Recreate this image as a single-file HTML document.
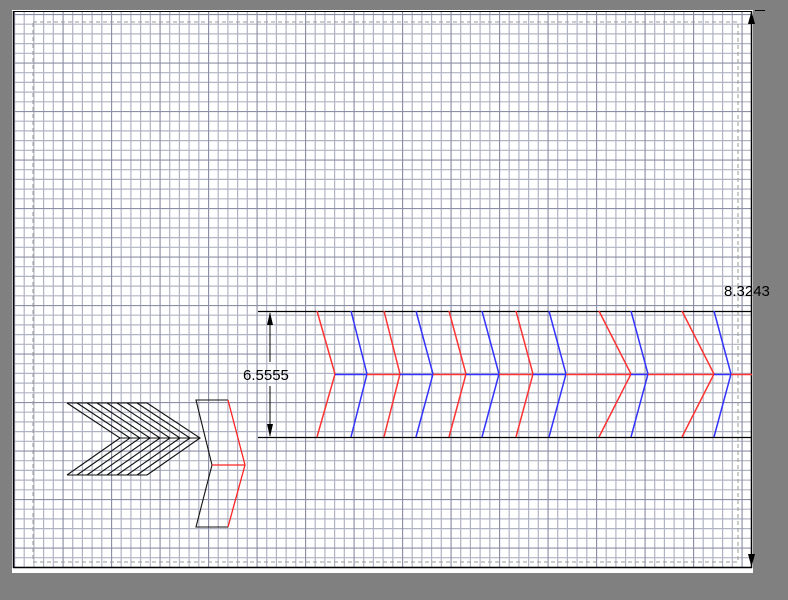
<!DOCTYPE html>
<html><head><style>
html,body{margin:0;padding:0;background:#808080;width:788px;height:600px;overflow:hidden}
svg{display:block}
</style></head><body>
<svg width="788" height="600" viewBox="0 0 788 600" xmlns="http://www.w3.org/2000/svg">
<defs>
<pattern id="g" x="14" y="14" width="48.5" height="48.5" patternUnits="userSpaceOnUse">
<g stroke="#b0b3c3" stroke-width="1.2">
<line x1="10.2" y1="0" x2="10.2" y2="48.5"/><line x1="19.9" y1="0" x2="19.9" y2="48.5"/><line x1="29.6" y1="0" x2="29.6" y2="48.5"/><line x1="39.3" y1="0" x2="39.3" y2="48.5"/>
<line y1="10.2" x1="0" y2="10.2" x2="48.5"/><line y1="19.9" x1="0" y2="19.9" x2="48.5"/><line y1="29.6" x1="0" y2="29.6" x2="48.5"/><line y1="39.3" x1="0" y2="39.3" x2="48.5"/>
</g>
<g stroke="#8c8fa6" stroke-width="1.3"><line x1="0.5" y1="0" x2="0.5" y2="48.5"/><line y1="0.5" x1="0" y2="0.5" x2="48.5"/></g>
</pattern>
</defs>
<rect x="12" y="10" width="741" height="563" fill="#fff"/>
<rect x="13" y="11" width="739" height="557" fill="url(#g)"/>
<rect x="33" y="22" width="705" height="540" fill="none" stroke="#999" stroke-dasharray="4,3"/>
<line x1="13.5" y1="11" x2="13.5" y2="568" stroke="#000" stroke-width="1.5"/>
<line x1="13" y1="11.5" x2="752" y2="11.5" stroke="#000"/>
<line x1="13" y1="567.5" x2="752" y2="567.5" stroke="#000" stroke-width="1.5"/>
<line x1="751.5" y1="11" x2="751.5" y2="568" stroke="#000" stroke-width="1.5"/>
<polygon points="751.5,11 748,24 755,24" fill="#000"/>
<polygon points="751.5,567 748,554 755,554" fill="#000"/>
<line x1="755" y1="10.5" x2="765" y2="10.5" stroke="#000"/>
<text x="724" y="296" font-family="Liberation Sans, sans-serif" font-size="15" fill="#000">8.3243</text>
<line x1="258" y1="311.5" x2="752" y2="311.5" stroke="#000" stroke-width="1.3"/>
<line x1="258" y1="437.5" x2="752" y2="437.5" stroke="#000" stroke-width="1.3"/>
<line x1="270" y1="313" x2="270" y2="362" stroke="#000"/>
<line x1="270" y1="386" x2="270" y2="436" stroke="#000"/>
<polygon points="270,312 267,325 273,325" fill="#000"/>
<polygon points="270,437 267,424 273,424" fill="#000"/>
<text x="243" y="380" font-family="Liberation Sans, sans-serif" font-size="15" fill="#000">6.5555</text>
<g stroke-width="1.5" fill="none">
<polyline points="317,311 335,374 317,437" stroke="#f33"/>
<polyline points="351,311 367,374 351,437" stroke="#33f"/>
<polyline points="384,311 400,374 384,437" stroke="#f33"/>
<polyline points="416,311 433,374 416,437" stroke="#33f"/>
<polyline points="449,311 466,374 449,437" stroke="#f33"/>
<polyline points="482,311 499,374 482,437" stroke="#33f"/>
<polyline points="516,311 533,374 516,437" stroke="#f33"/>
<polyline points="549,311 566,374 549,437" stroke="#33f"/>
<polyline points="599,311 631,374 599,437" stroke="#f33"/>
<polyline points="631,311 648,374 631,437" stroke="#33f"/>
<polyline points="682,311 714,374 682,437" stroke="#f33"/>
<polyline points="714,311 731,374 714,437" stroke="#33f"/>
<line x1="335" y1="374.5" x2="367" y2="374.5" stroke="#33f"/>
<line x1="367" y1="374.5" x2="400" y2="374.5" stroke="#f33"/>
<line x1="400" y1="374.5" x2="433" y2="374.5" stroke="#33f"/>
<line x1="433" y1="374.5" x2="466" y2="374.5" stroke="#f33"/>
<line x1="466" y1="374.5" x2="499" y2="374.5" stroke="#33f"/>
<line x1="499" y1="374.5" x2="533" y2="374.5" stroke="#f33"/>
<line x1="533" y1="374.5" x2="566" y2="374.5" stroke="#33f"/>
<line x1="566" y1="374.5" x2="631" y2="374.5" stroke="#f33"/>
<line x1="631" y1="374.5" x2="648" y2="374.5" stroke="#33f"/>
<line x1="648" y1="374.5" x2="714" y2="374.5" stroke="#f33"/>
<line x1="714" y1="374.5" x2="731" y2="374.5" stroke="#33f"/>
<line x1="731" y1="374.5" x2="752" y2="374.5" stroke="#f33"/>
</g>
<g stroke="#111" stroke-width="1.1" fill="none">
<line x1="67" y1="403" x2="147" y2="403"/>
<line x1="67" y1="475" x2="147" y2="475"/>
<polyline points="67,403 120,438 67,475"/>
<polyline points="77,403 130,438 77,475"/>
<polyline points="87,403 140,438 87,475"/>
<polyline points="97,403 150,438 97,475"/>
<polyline points="107,403 160,438 107,475"/>
<polyline points="117,403 170,438 117,475"/>
<polyline points="127,403 180,438 127,475"/>
<polyline points="137,403 190,438 137,475"/>
<polyline points="147,403 200,438 147,475"/>
<line x1="120" y1="438" x2="200" y2="438"/>
<polyline points="228,400 196,400 212,465 196,527 228,527"/>
</g>
<g stroke="#f22" stroke-width="1.3" fill="none">
<polyline points="228,400 245,465 228,527"/>
<line x1="212" y1="465" x2="245" y2="465"/>
</g>
</svg>
</body></html>
